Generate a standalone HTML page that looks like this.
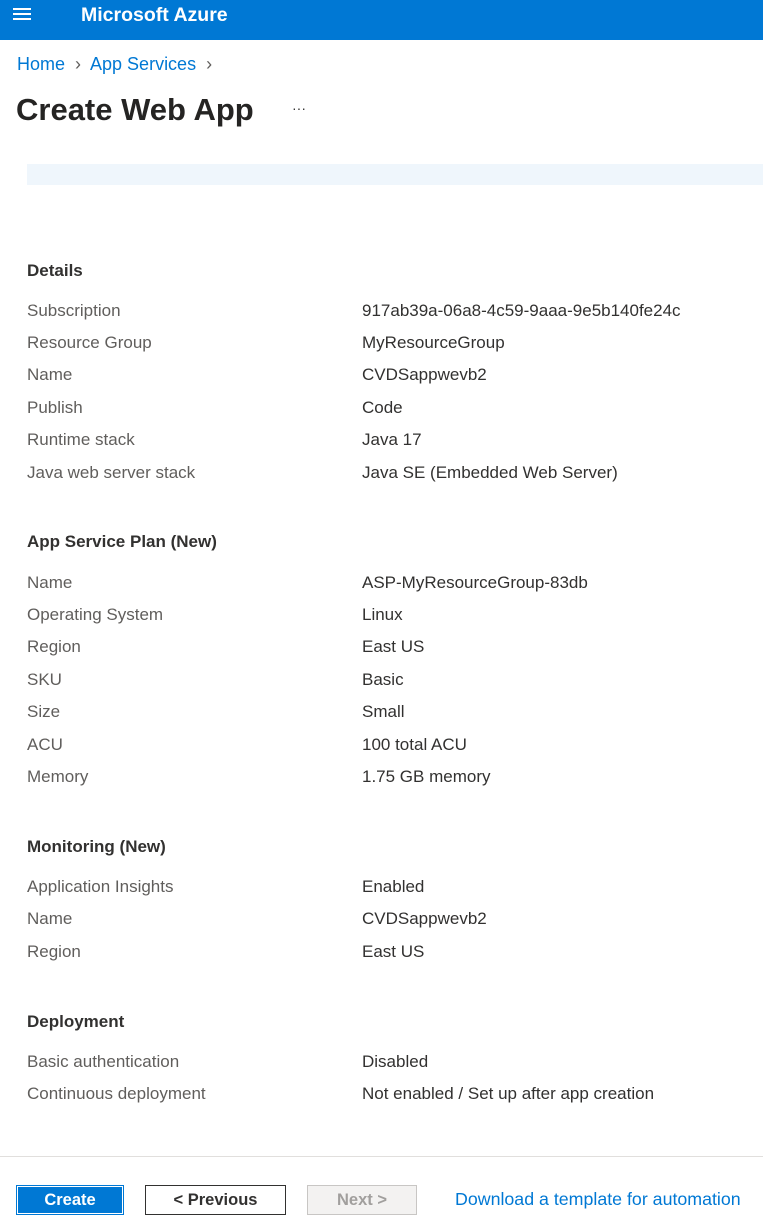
<!DOCTYPE html>
<html><head><meta charset="utf-8"><style>
body{margin:0;width:763px;height:1228px;overflow:hidden;background:#fff;font-family:"Liberation Sans",sans-serif;position:relative}
.a{position:absolute;white-space:nowrap}
.l{left:27px;font-size:17px;color:#605e5c}
.v{left:362px;font-size:17px;color:#323130}
.h{left:27px;font-size:17px;font-weight:bold;color:#323130}
.btn{position:absolute;top:1185px;height:30px;box-sizing:border-box;font-size:16.5px;text-align:center;line-height:28px}
</style></head><body>
<div class="a" style="left:0;top:0;width:763px;height:40px;background:#0078d4"></div>
<div class="a" style="left:13px;top:8px;width:18px;height:2px;background:#fff;box-shadow:0 5px 0 #fff,0 10px 0 #fff"></div>
<div class="a" style="left:81px;top:4px;font-size:19.5px;font-weight:bold;color:#fff">Microsoft Azure</div>
<div class="a" style="left:17px;top:54px;font-size:18px;color:#0078d4">Home <span style="color:#605e5c">&nbsp;›&nbsp;</span> App Services <span style="color:#605e5c">&nbsp;›</span></div>
<div class="a" style="left:16px;top:92px;font-size:31px;font-weight:bold;color:#252423">Create Web App</div>
<div class="a" style="left:292px;top:100px;font-size:14px;color:#323130">···</div>
<div class="a" style="left:27px;top:164px;width:736px;height:21px;background:#eff6fc"></div>

<div class="a h" style="top:261px">Details</div>
<div class="a l" style="top:301px">Subscription</div><div class="a v" style="top:301px">917ab39a-06a8-4c59-9aaa-9e5b140fe24c</div>
<div class="a l" style="top:333px">Resource Group</div><div class="a v" style="top:333px">MyResourceGroup</div>
<div class="a l" style="top:365px">Name</div><div class="a v" style="top:365px">CVDSappwevb2</div>
<div class="a l" style="top:398px">Publish</div><div class="a v" style="top:398px">Code</div>
<div class="a l" style="top:430px">Runtime stack</div><div class="a v" style="top:430px">Java 17</div>
<div class="a l" style="top:463px">Java web server stack</div><div class="a v" style="top:463px">Java SE (Embedded Web Server)</div>

<div class="a h" style="top:532px">App Service Plan (New)</div>
<div class="a l" style="top:573px">Name</div><div class="a v" style="top:573px">ASP-MyResourceGroup-83db</div>
<div class="a l" style="top:605px">Operating System</div><div class="a v" style="top:605px">Linux</div>
<div class="a l" style="top:637px">Region</div><div class="a v" style="top:637px">East US</div>
<div class="a l" style="top:670px">SKU</div><div class="a v" style="top:670px">Basic</div>
<div class="a l" style="top:702px">Size</div><div class="a v" style="top:702px">Small</div>
<div class="a l" style="top:735px">ACU</div><div class="a v" style="top:735px">100 total ACU</div>
<div class="a l" style="top:767px">Memory</div><div class="a v" style="top:767px">1.75 GB memory</div>

<div class="a h" style="top:837px">Monitoring (New)</div>
<div class="a l" style="top:877px">Application Insights</div><div class="a v" style="top:877px">Enabled</div>
<div class="a l" style="top:909px">Name</div><div class="a v" style="top:909px">CVDSappwevb2</div>
<div class="a l" style="top:942px">Region</div><div class="a v" style="top:942px">East US</div>

<div class="a h" style="top:1012px">Deployment</div>
<div class="a l" style="top:1052px">Basic authentication</div><div class="a v" style="top:1052px">Disabled</div>
<div class="a l" style="top:1084px">Continuous deployment</div><div class="a v" style="top:1084px">Not enabled / Set up after app creation</div>

<div class="a" style="left:0;top:1156px;width:763px;height:1px;background:#e1dfdd"></div>
<div class="btn" style="left:16px;width:108px;background:#0078d4;color:#fff;border:1px solid #0078d4;box-shadow:inset 0 0 0 1px #fff;font-weight:bold">Create</div>
<div class="btn" style="left:145px;width:141px;border:1px solid #323130;color:#323130;font-weight:bold">&lt; Previous</div>
<div class="btn" style="left:307px;width:110px;border:1px solid #c8c6c4;background:#f3f2f1;color:#a19f9d;font-weight:bold">Next &gt;</div>
<div class="a" style="left:455px;top:1189px;font-size:17.8px;color:#0078d4">Download a template for automation</div>
</body></html>
